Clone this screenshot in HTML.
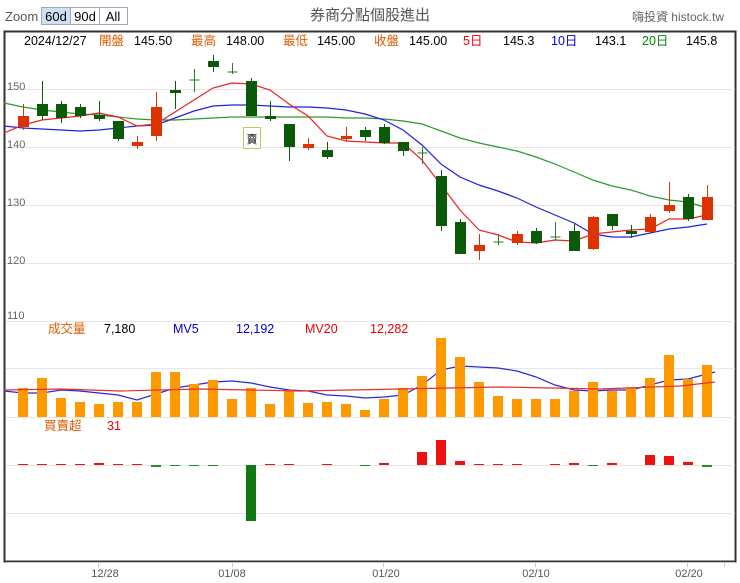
<!DOCTYPE html>
<html><head><meta charset="utf-8"><style>
body{margin:0;background:#fff;width:740px;height:583px;overflow:hidden;font-family:"Liberation Sans","Noto Sans CJK TC",sans-serif}
svg{position:absolute;left:0;top:0}
</style></head><body>
<svg id="s" width="740" height="583" xmlns="http://www.w3.org/2000/svg" font-family="Liberation Sans, Noto Sans CJK TC, sans-serif">
<text x="5" y="21" font-size="13" fill="#555">Zoom</text>
<rect x="41.5" y="7.5" width="29" height="17" fill="#cfe0f5" stroke="#9ab"/>
<rect x="70.5" y="7.5" width="29" height="17" fill="#fff" stroke="#9ab"/>
<rect x="99.5" y="7.5" width="28" height="17" fill="#fff" stroke="#9ab"/>
<text x="56" y="21" font-size="13" text-anchor="middle" fill="#000">60d</text>
<text x="85" y="21" font-size="13" text-anchor="middle" fill="#000">90d</text>
<text x="113" y="21" font-size="13" text-anchor="middle" fill="#000">All</text>
<text x="370" y="20" font-size="15" text-anchor="middle" fill="#555">券商分點個股進出</text>
<text x="724" y="21" font-size="12" text-anchor="end" fill="#666">嗨投資 histock.tw</text>
<rect x="4.5" y="31.5" width="731" height="530" fill="none" stroke="#333" stroke-width="2"/>
<g font-size="12.5">
<text x="24" y="45" fill="#000">2024/12/27</text>
<text x="99" y="45" fill="#e05a00">開盤</text>
<text x="134" y="45" fill="#000">145.50</text>
<text x="191" y="45" fill="#e05a00">最高</text>
<text x="226" y="45" fill="#000">148.00</text>
<text x="283" y="45" fill="#e05a00">最低</text>
<text x="317" y="45" fill="#000">145.00</text>
<text x="374" y="45" fill="#e05a00">收盤</text>
<text x="409" y="45" fill="#000">145.00</text>
<text x="463" y="45" fill="#e00">5日</text>
<text x="503" y="45" fill="#000">145.3</text>
<text x="551" y="45" fill="#00c">10日</text>
<text x="595" y="45" fill="#000">143.1</text>
<text x="642" y="45" fill="#080">20日</text>
<text x="686" y="45" fill="#000">145.8</text>
</g>
<g stroke="#e6e6e6" stroke-width="1">
<line x1="6" y1="89.5" x2="735" y2="89.5"/><line x1="6" y1="147.5" x2="735" y2="147.5"/>
<line x1="6" y1="205.5" x2="735" y2="205.5"/><line x1="6" y1="263.5" x2="735" y2="263.5"/>
<line x1="6" y1="321.5" x2="735" y2="321.5"/><line x1="6" y1="368.5" x2="735" y2="368.5"/>
<line x1="6" y1="417.5" x2="735" y2="417.5"/><line x1="6" y1="465.5" x2="735" y2="465.5"/>
<line x1="6" y1="513.5" x2="735" y2="513.5"/>
</g>
<g font-size="11" fill="#666">
<text x="7" y="90">150</text><text x="7" y="148">140</text><text x="7" y="206">130</text><text x="7" y="264">120</text><text x="7" y="319">110</text>
</g>
<g font-size="12.5">
<text x="48" y="333" fill="#e05a00">成交量</text><text x="104" y="333" fill="#000">7,180</text>
<text x="173" y="333" fill="#00c">MV5</text><text x="236" y="333" fill="#00c">12,192</text>
<text x="305" y="333" fill="#e00">MV20</text><text x="370" y="333" fill="#e00">12,282</text>
<text x="44" y="430" fill="#e05a00">買賣超</text><text x="107" y="430" fill="#e00">31</text>
</g>
<g id="c"></g>
<rect x="243.5" y="127.5" width="17" height="21" fill="#fff" stroke="#bc6"/>
<text x="252" y="143" font-size="11" text-anchor="middle" fill="#000">賣</text>
<line x1="6" y1="562.5" x2="735" y2="562.5" stroke="#ccc"/>
<g stroke="#ccc"><line x1="98.5" y1="562" x2="98.5" y2="567"/><line x1="232.5" y1="562" x2="232.5" y2="567"/><line x1="383.5" y1="562" x2="383.5" y2="567"/><line x1="535.5" y1="562" x2="535.5" y2="567"/><line x1="687.5" y1="562" x2="687.5" y2="567"/><line x1="724.5" y1="562" x2="724.5" y2="567"/></g>
<g font-size="11" fill="#555" text-anchor="middle">
<text x="105" y="577">12/28</text><text x="232" y="577">01/08</text><text x="386" y="577">01/20</text><text x="536" y="577">02/10</text><text x="689" y="577">02/20</text>
</g>
</svg>
<script>
var C=[
['r',116,127,104,130],['g',104,116,81,120],['g',104,118,101,123],['g',107,116,104,118],['g',115,119,101,121],
['g',121,139,121,141],['r',142,146,136,149],['r',107,136,92,141],['g',90,93,81,109],['x',80,80,69,92],
['g',61,67,55,72],['x',72,72,63,74],['g',81,116,78,116],['g',116,119,101,121],['g',124,147,124,161],
['r',144,148,138,150],['g',150,157,142,159],['r',136,139,127,141],['g',130,137,127,141],['g',127,143,124,144],
['g',142,151,142,156],['x',153,153,147,164],['g',176,226,170,231],['g',222,254,219,254],['r',245,251,234,260],
['x',242,242,234,245],['r',234,243,231,245],['g',231,243,228,244],['x',237,237,222,240],['g',231,251,224,251],
['r',217,249,216,250],['g',214,226,214,230],['g',231,234,225,238],['r',217,232,214,234],['r',205,211,182,213],
['g',197,219,194,221],['r',197,220,185,220]];
var V=[388,378,398,402,404,402,402,372,372,384,380,399,388,404,390,403,402,404,410,399,388,376,338,357,382,396,399,399,399,391,382,391,388,378,355,379,365];
var B=[-1,-1,-1,-2,-1,-1,2,1,1,1,0,0,56,-1,-1,0,-1,0,0,1,-2,-13,-25,-4,-1,-1,0,0,0,-1,-2,1,-2,0,0,-10,-9,-3,2];
var red=[[4,133],[23,125],[42,120],[61,118],[80,116],[99,113],[118,117],[137,126],[156,124],[175,112],[194,100],[213,88],[232,83],[251,84],[270,90],[289,104],[308,116],[327,136],[346,141],[365,142],[384,143],[403,143],[422,160],[441,185],[460,210],[479,230],[498,235],[517,242],[536,243],[555,240],[574,241],[593,234],[612,232],[631,230],[650,229],[669,219],[688,219],[707,215]];
var blue=[[4,126],[23,128],[42,129],[80,131],[99,130],[118,128],[137,126],[156,125],[175,118],[194,111],[213,106],[232,105],[251,105],[270,106],[289,107],[308,107],[327,108],[346,110],[365,114],[384,120],[403,130],[422,145],[441,164],[460,177],[479,185],[498,191],[517,198],[536,207],[555,215],[574,223],[593,234],[612,237],[631,237],[650,233],[669,229],[688,227],[707,224]];
var green=[[4,103],[23,107],[42,110],[61,112],[80,114],[99,115],[118,117],[137,119],[156,120],[175,120],[194,119],[213,118],[232,117],[251,117],[270,117],[289,117],[308,117],[327,117],[346,118],[365,118],[384,119],[403,121],[422,124],[441,131],[460,138],[479,143],[498,147],[517,151],[536,157],[555,164],[574,172],[593,180],[612,186],[631,190],[650,196],[669,200],[688,202],[707,208]];
var mv5=[393,393,390,391,393,395,400,394,388,385,382,381,383,387,390,391,395,396,398,397,395,385,370,366,367,368,371,377,385,390,391,390,390,385,380,379,374];
var h='';
for(var i=0;i<37;i++){var x=23+i*19;h+='<rect x="'+(x-5)+'" y="'+V[i]+'" width="10" height="'+(417-V[i])+'" fill="#ff9900"/>';}
function pl(p,c){return '<polyline fill="none" stroke="'+c+'" stroke-width="1.2" points="'+p.map(function(a){return a.join(',')}).join(' ')+'"/>';}
h+=pl(mv5.map(function(y,i){return [23+i*19,y]}).concat([]), '#2a2ad8');
h+='<polyline fill="none" stroke="#e03030" stroke-width="1.2" points="4,390 60,389 120,391 200,389 300,391 400,389 500,387 600,389 680,386 715,382"/>';
h='<polyline fill="none" stroke="#2a2ad8" stroke-width="1.2" points="4,391 '+mv5.map(function(y,i){return (23+i*19)+','+y}).join(' ')+' 715,372"/>'+h.replace(/<polyline[^>]*2a2ad8[^>]*\/>/,'');
var bs=[[23,-1],[42,-1],[61,-1],[80,-1],[99,-2],[118,-1],[137,-1],[156,2],[175,1],[194,1],[213,1],[251,56],[270,-1],[289,-1],[327,-1],[365,1],[384,-2],[422,-13],[441,-25],[460,-4],[479,-1],[498,-1],[517,-1],[555,-1],[574,-2],[593,1],[612,-2],[650,-10],[669,-9],[688,-3],[707,2]];
bs.forEach(function(b){var x=b[0],v=b[1];if(v<0)h+='<rect x="'+(x-5)+'" y="'+(465+v)+'" width="10" height="'+(-v)+'" fill="#ee1111"/>';else h+='<rect x="'+(x-5)+'" y="465" width="10" height="'+v+'" fill="'+(v>20?'#117711':'#2a8a2a')+'"/>';});
h+=pl(green,'#2e9a2e')+pl(blue,'#2222dd')+pl(red,'#ee2222');
C.forEach(function(c,i){var x=23+i*19+0.5;var col=c[0]=='r'?'#dd3300':(c[0]=='g'?'#0a5a0a':'#2a7a2a');
h+='<line x1="'+x+'" y1="'+c[3]+'" x2="'+x+'" y2="'+c[4]+'" stroke="'+col+'"/>';
if(c[0]=='x')h+='<line x1="'+(x-5)+'" y1="'+c[1]+'" x2="'+(x+5)+'" y2="'+c[1]+'" stroke="'+col+'"/>';
else h+='<rect x="'+(x-5.5)+'" y="'+c[1]+'" width="11" height="'+Math.max(2,c[2]-c[1])+'" fill="'+col+'"/>';});
document.getElementById('c').innerHTML=h;
</script>
</body></html>
